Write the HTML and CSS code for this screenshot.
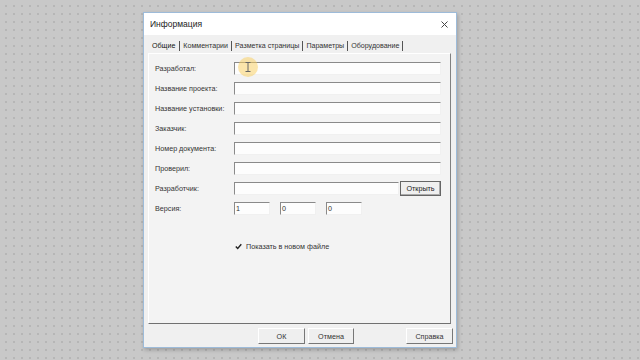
FILE: index.html
```html
<!DOCTYPE html>
<html lang="ru">
<head>
<meta charset="utf-8">
<title>Информация</title>
<link rel="stylesheet" href="styles.css">
</head>
<body>
<div class="dialog">
  <div class="titlebar">
    <span class="title">Информация</span>
    <span class="close">
      <svg width="7" height="7" viewBox="0 0 7 7"><path d="M0.5 0.5 L6.5 6.5 M6.5 0.5 L0.5 6.5" stroke="#444" stroke-width="1" fill="none"/></svg>
    </span>
  </div>
  <div class="body">
    <div class="tabs">
      <span class="tab active">Общие</span>
      <span class="tab">Комментарии</span>
      <span class="tab">Разметка страницы</span>
      <span class="tab">Параметры</span>
      <span class="tab">Оборудование</span>
    </div>
    <div class="panel">
      <div class="row"><span class="label">Разработал:</span><span class="field wide"></span></div>
      <div class="row"><span class="label">Название проекта:</span><span class="field wide"></span></div>
      <div class="row"><span class="label">Название установки:</span><span class="field wide"></span></div>
      <div class="row"><span class="label">Заказчик:</span><span class="field wide"></span></div>
      <div class="row"><span class="label">Номер документа:</span><span class="field wide"></span></div>
      <div class="row"><span class="label">Проверил:</span><span class="field wide"></span></div>
      <div class="row"><span class="label">Разработчик:</span><span class="field dev"></span><span class="btn open">Открыть</span></div>
      <div class="row"><span class="label">Версия:</span><span class="field ver">1</span><span class="field ver">0</span><span class="field ver">0</span></div>
      <div class="check-row">
        <span class="checkbox"><svg width="7" height="7" viewBox="0 0 7 7"><path d="M0.8 3.4 L2.7 5.4 L6.3 1.2" stroke="#222" stroke-width="1.4" fill="none"/></svg></span>
        <span class="check-label">Показать в новом файле</span>
      </div>
      <div class="cursor-hl"><svg width="6" height="10" viewBox="0 0 6 10"><path d="M0.5 0.5 H5.5 M3 0.5 V9.5 M0.5 9.5 H5.5" stroke="#666" stroke-width="1" fill="none"/></svg></div>
    </div>
    <div class="buttons">
      <span class="btn dlg">ОК</span>
      <span class="btn dlg">Отмена</span>
      <span class="spacer"></span>
      <span class="btn dlg">Справка</span>
    </div>
  </div>
</div>
</body>
</html>
```
FILE: styles.css
```css
html, body {
  margin: 0;
  padding: 0;
}
body {
  width: 640px;
  height: 360px;
  overflow: hidden;
  background-color: #c8c8c8;
  background-image: radial-gradient(circle, #b6b6b6 0.9px, transparent 1.3px);
  background-size: 8px 8px;
  background-position: 2px 2px;
  font-family: "Liberation Sans", Arial, sans-serif;
  color: #222;
  padding: 12px 0 0 143px;
  box-sizing: border-box;
}
.dialog {
  width: 314px;
  height: 336px;
  border: 1px solid #9dbbd9;
  box-sizing: border-box;
  background: #f0f0f0;
  display: flex;
  flex-direction: column;
  box-shadow: 1px 2px 4px rgba(0,0,0,0.22);
  position: relative;
}
.titlebar {
  height: 22px;
  background: #ffffff;
  display: flex;
  align-items: center;
  padding: 0 6px 0 6px;
  flex: none;
}
.title {
  font-size: 8.5px;
  color: #222;
  flex: 1;
}
.close {
  display: flex;
  align-items: center;
  margin-right: 2px;
}
.body {
  flex: 1;
  display: flex;
  flex-direction: column;
  padding: 3px 3px 0 4px;
}
.tabs {
  height: 15px;
  display: flex;
  align-items: center;
  font-size: 7.1px;
  padding-left: 4px;
}
.tab {
  padding: 0 3px;
  border-right: 1px solid #555;
  line-height: 10px;
  color: #333;
}
.tab.active {
  padding-left: 0;
  padding-right: 4px;
  color: #111;
}
.panel {
  height: 271px;
  border-top: 1px solid #ffffff;
  border-left: 1px solid #ffffff;
  border-right: 1px solid #808080;
  border-bottom: 1px solid #707070;
  box-sizing: border-box;
  background: #f3f3f3;
  padding: 8px 0 0 6px;
  position: relative;
  margin-right: 2px;
}
.row {
  display: flex;
  align-items: center;
  height: 13px;
  margin-bottom: 7px;
}
.label {
  width: 79px;
  flex: none;
  font-size: 7.2px;
  color: #333;
}
.field {
  height: 13px;
  box-sizing: border-box;
  background: #fdfdfd;
  border-top: 1px solid #8a8a8a;
  border-left: 1px solid #8a8a8a;
  border-right: 1px solid #f0f0f0;
  border-bottom: 1px solid #f0f0f0;
  font-size: 7.2px;
  line-height: 11px;
  padding-left: 1px;
  color: #333;
}
.field.wide { width: 207px; }
.field.dev { width: 165px; margin-right: 1px; }
.field.ver { width: 36px; margin-right: 10px; }
.btn {
  display: flex;
  align-items: center;
  justify-content: center;
  box-sizing: border-box;
  font-size: 7.2px;
  color: #333;
  background: #efefef;
  border-top: 1px solid #ffffff;
  border-left: 1px solid #ffffff;
  border-right: 1px solid #777;
  border-bottom: 1px solid #777;
}
.btn.open {
  width: 41px;
  height: 15px;
  border: 1px solid #666;
  box-shadow: inset -1px -1px 0 #aaa;
  color: #222;
}
.check-row {
  display: flex;
  align-items: center;
  margin: 26px 0 0 79px;
  height: 10px;
}
.checkbox {
  width: 8px;
  height: 8px;
  display: flex;
  align-items: center;
  justify-content: center;
  margin-right: 4px;
}
.check-label {
  font-size: 7.2px;
  color: #333;
}
.cursor-hl {
  position: absolute;
  left: 89px;
  top: 3px;
  width: 20px;
  height: 20px;
  border-radius: 50%;
  background: rgba(250, 205, 90, 0.5);
  display: flex;
  align-items: center;
  justify-content: center;
}
.buttons {
  display: flex;
  align-items: flex-start;
  padding-top: 4px;
  padding-left: 110px;
}
.btn.dlg {
  height: 16px;
  width: 47px;
  margin-right: 3px;
}
.buttons .btn.dlg:nth-child(2) { width: 46px; }
.spacer { flex: 1; }
.buttons .btn.dlg:last-child { margin-right: 0; width: 47px; }
```
